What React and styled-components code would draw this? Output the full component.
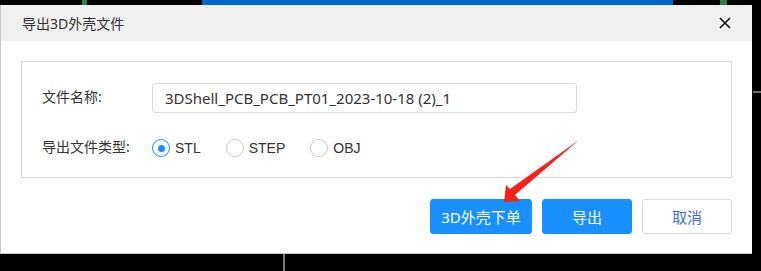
import React from 'react';
import styled, { createGlobalStyle } from 'styled-components';

const GlobalStyle = createGlobalStyle`
  html, body {
    margin: 0;
    padding: 0;
    background: #000;
  }
  body {
    font-family: "Noto Sans", "Noto Sans CJK SC", sans-serif;
  }
`;

const Page = styled.div`
  position: relative;
  width: 761px;
  height: 271px;
  background: #000;
  overflow: hidden;
  display: flex;
  flex-direction: column;
`;

const TopStrip = styled.div`
  height: 5px;
  display: flex;
`;

const Segment = styled.div`
  height: 100%;
  margin-left: ${(p) => p.$offset}px;
  width: ${(p) => p.$width}px;
  background: ${(p) => p.$color};
`;

const Middle = styled.div`
  display: flex;
`;

const SideStrip = styled.div`
  flex: 1;
  display: flex;
  flex-direction: column;
  padding-top: 86px;
`;

const SideLine = styled.div`
  height: 2px;
  margin-left: 1px;
  background: #6d6d6d;
`;

const BottomStrip = styled.div`
  flex: 1;
  display: flex;
`;

const BottomLine = styled.div`
  width: 2px;
  margin-left: 283px;
  background: #7a7a7a;
`;

const Dialog = styled.div`
  width: 752px;
  height: 249px;
  box-sizing: border-box;
  background: #fff;
  border-left: 1px solid #c8c8c8;
  border-bottom: 1px solid #c8c8c8;
  display: flex;
  flex-direction: column;
`;

const Header = styled.div`
  height: 36px;
  background: #f0f0f0;
  display: flex;
  align-items: center;
  justify-content: space-between;
  padding: 0 20px 0 21px;
`;

const Title = styled.div`
  font-size: 14px;
  color: #333;
`;

const CloseButton = styled.div`
  width: 14px;
  height: 14px;
  display: flex;
  align-items: center;
  justify-content: center;
`;

const Body = styled.div`
  padding: 20px 20px 0 20px;
  display: flex;
  flex-direction: column;
`;

const FieldBox = styled.div`
  height: 117px;
  box-sizing: border-box;
  border: 1px solid #d9d9d9;
  padding: 21px 20px 0 20px;
  display: flex;
  flex-direction: column;
  gap: 20px;
`;

const Row = styled.div`
  display: flex;
  align-items: center;
  height: 30px;
`;

const Label = styled.div`
  width: 110px;
  font-size: 14px;
  color: #333;
  margin-top: -5px;
`;

const Input = styled.div`
  width: 425px;
  height: 30px;
  box-sizing: border-box;
  border: 1px solid #d9d9d9;
  border-radius: 3px;
  padding-left: 12px;
  display: flex;
  align-items: center;
  font-size: 15px;
  color: #333;
`;

const RadioGroup = styled.div`
  display: flex;
  align-items: center;
  gap: 25px;
`;

const RadioOption = styled.label`
  display: flex;
  align-items: center;
  gap: 5px;
  font-family: "Liberation Sans", "Noto Sans CJK SC", sans-serif;
  font-size: 14px;
  color: #333;
`;

const RadioCircle = styled.span`
  width: 18px;
  height: 18px;
  box-sizing: border-box;
  border-radius: 50%;
  border: 1px solid ${(p) => (p.$checked ? '#1890ff' : '#c9c9c9')};
  display: flex;
  align-items: center;
  justify-content: center;

  &::after {
    content: '';
    width: 7px;
    height: 7px;
    border-radius: 50%;
    background: ${(p) => (p.$checked ? '#1890ff' : 'transparent')};
  }
`;

const Footer = styled.div`
  display: flex;
  justify-content: flex-end;
  gap: 10px;
  margin-top: 21px;
`;

const Button = styled.button`
  width: ${(p) => p.$width}px;
  height: 35px;
  box-sizing: border-box;
  border-radius: 3px;
  font-family: inherit;
  font-size: 15px;
  padding: 0;
  border: 1px solid ${(p) => (p.$primary ? '#1890ff' : '#d9d9d9')};
  background: ${(p) => (p.$primary ? '#1890ff' : '#fff')};
  color: ${(p) => (p.$primary ? '#fff' : '#3b6fd6')};
`;

const ArrowOverlay = styled.svg`
  position: absolute;
  left: 0;
  top: 0;
  pointer-events: none;
`;

const options = [
  { name: 'STL', checked: true },
  { name: 'STEP', checked: false },
  { name: 'OBJ', checked: false },
];

export default function App() {
  return (
    <>
      <GlobalStyle />
      <Page>
        <TopStrip>
          <Segment $offset={82} $width={5} $color="#2e7d46" />
          <Segment $offset={115} $width={471} $color="#0066cc" />
          <Segment $offset={47} $width={7} $color="#2e7d46" />
        </TopStrip>
        <Middle>
          <Dialog>
            <Header>
              <Title>导出3D外壳文件</Title>
              <CloseButton>
                <svg width="12" height="12" viewBox="0 0 12 12">
                  <path d="M1 1 L11 11 M11 1 L1 11" stroke="#111" strokeWidth="1.6" />
                </svg>
              </CloseButton>
            </Header>
            <Body>
              <FieldBox>
                <Row>
                  <Label>文件名称:</Label>
                  <Input>3DShell_PCB_PCB_PT01_2023-10-18 (2)_1</Input>
                </Row>
                <Row>
                  <Label>导出文件类型:</Label>
                  <RadioGroup>
                    {options.map((o) => (
                      <RadioOption key={o.name}>
                        <RadioCircle $checked={o.checked} />
                        {o.name}
                      </RadioOption>
                    ))}
                  </RadioGroup>
                </Row>
              </FieldBox>
              <Footer>
                <Button $primary $width={102}>3D外壳下单</Button>
                <Button $primary $width={90}>导出</Button>
                <Button $width={90}>取消</Button>
              </Footer>
            </Body>
          </Dialog>
          <SideStrip>
            <SideLine />
          </SideStrip>
        </Middle>
        <BottomStrip>
          <BottomLine />
        </BottomStrip>
        <ArrowOverlay width="761" height="271">
          <polygon
            points="504,202 506,185 510,189 579,140 515,195 520,201"
            fill="#f5221b"
          />
        </ArrowOverlay>
      </Page>
    </>
  );
}
